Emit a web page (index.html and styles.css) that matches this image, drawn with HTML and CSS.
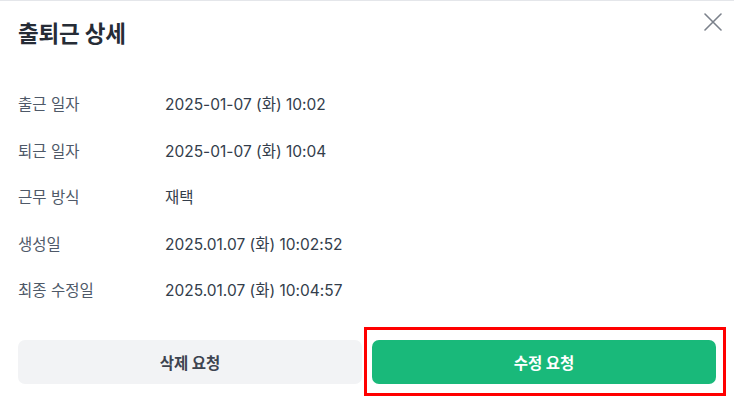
FILE: index.html
```html
<!DOCTYPE html>
<html lang="ko">
<head>
<meta charset="utf-8">
<title>출퇴근 상세</title>
<link rel="stylesheet" href="styles.css">
</head>
<body>
<div class="modal">
  <header class="modal-header">
    <h1 class="modal-title">출퇴근 상세</h1>
    <button class="close-btn" aria-label="닫기">
      <svg width="18" height="18" viewBox="0 0 18 18" fill="none">
        <path d="M1 1L17 17M17 1L1 17" stroke="#7b818b" stroke-width="1.6" stroke-linecap="round"/>
      </svg>
    </button>
  </header>
  <dl class="detail-list">
    <div class="detail-row"><dt>출근 일자</dt><dd>2025-01-07 (화) 10:02</dd></div>
    <div class="detail-row"><dt>퇴근 일자</dt><dd>2025-01-07 (화) 10:04</dd></div>
    <div class="detail-row"><dt>근무 방식</dt><dd>재택</dd></div>
    <div class="detail-row"><dt>생성일</dt><dd>2025.01.07 (화) 10:02:52</dd></div>
    <div class="detail-row"><dt>최종 수정일</dt><dd>2025.01.07 (화) 10:04:57</dd></div>
  </dl>
  <div class="actions">
    <button class="btn btn-secondary">삭제 요청</button>
    <div class="highlight-wrap">
      <button class="btn btn-primary">수정 요청</button>
      <span class="highlight"></span>
    </div>
  </div>
</div>
</body>
</html>
```

FILE: styles.css
```css
* { box-sizing: border-box; }
html, body {
  margin: 0;
  padding: 0;
  background: #ffffff;
}
body {
  font-family: "Inter", "Noto Sans CJK KR", sans-serif;
  color: #333d4b;
  width: 734px;
  height: 404px;
  overflow: hidden;
}
.modal {
  position: relative;
  height: 404px;
  border-top: 1px solid #e4e6ea;
  padding: 0 18px;
}
.modal-header {
  padding-top: 18px;
  height: 79px;
}
.modal-title {
  margin: 0;
  font-size: 22.5px;
  line-height: 30px;
  font-weight: 700;
  color: #262c36;
  letter-spacing: -0.2px;
}
.close-btn {
  position: absolute;
  top: 11px;
  right: 11px;
  width: 20px;
  height: 20px;
  padding: 1px;
  border: 0;
  background: transparent;
  display: flex;
  align-items: center;
  justify-content: center;
  cursor: pointer;
}
.detail-list {
  margin: 0;
  padding: 0;
}
.detail-row {
  display: flex;
  align-items: center;
  height: 46.5px;
}
.detail-row dt {
  width: 147px;
  flex: none;
  font-size: 15.5px;
  color: #4e5968;
}
.detail-row dd {
  margin: 0;
  font-size: 15.5px;
  color: #333d4b;
}
.actions {
  margin-top: 27px;
  display: grid;
  grid-template-columns: 1fr 1fr;
  gap: 10px;
}
.btn {
  height: 44px;
  width: 100%;
  border: 0;
  border-radius: 7px;
  font-family: "Inter", "Noto Sans CJK KR", sans-serif;
  font-size: 15.5px;
  font-weight: 700;
  cursor: pointer;
}
.btn-secondary {
  background: #f2f3f5;
  color: #3d4450;
}
.btn-primary {
  background: #19b97a;
  color: #ffffff;
}
.highlight-wrap {
  position: relative;
}
.highlight {
  position: absolute;
  top: -13px;
  bottom: -12px;
  left: -8px;
  right: -10px;
  border: 3px solid #ff0000;
  pointer-events: none;
}
```
